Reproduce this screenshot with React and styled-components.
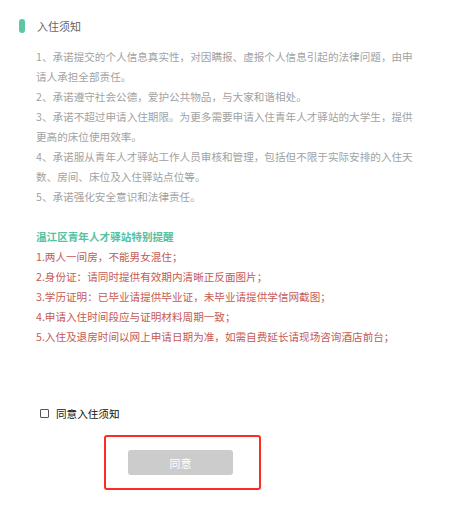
import styled, { createGlobalStyle } from "styled-components";

const GlobalStyle = createGlobalStyle`
  html, body {
    margin: 0;
    padding: 0;
    background: #fff;
  }
  body {
    font-family: "Microsoft YaHei", "Noto Sans CJK SC", "Noto Sans", sans-serif;
  }
`;

const notices = [
  "1、承诺提交的个人信息真实性，对因瞒报、虚报个人信息引起的法律问题，由申请人承担全部责任。",
  "2、承诺遵守社会公德，爱护公共物品，与大家和谐相处。",
  "3、承诺不超过申请入住期限。为更多需要申请入住青年人才驿站的大学生，提供更高的床位使用效率。",
  "4、承诺服从青年人才驿站工作人员审核和管理，包括但不限于实际安排的入住天数、房间、床位及入住驿站点位等。",
  "5、承诺强化安全意识和法律责任。",
];

const reminders = [
  "1.两人一间房，不能男女混住；",
  "2.身份证：请同时提供有效期内清晰正反面图片；",
  "3.学历证明：已毕业请提供毕业证，未毕业请提供学信网截图；",
  "4.申请入住时间段应与证明材料周期一致；",
  "5.入住及退房时间以网上申请日期为准，如需自费延长请现场咨询酒店前台；",
];

export default function App() {
  return (
    <>
      <GlobalStyle />
      <Page>
        <Header>
          <Marker />
          <Title>入住须知</Title>
        </Header>
        <Body>
          <NoticeList>
            {notices.map((t) => (
              <Line key={t}>{t}</Line>
            ))}
          </NoticeList>
          <RemindTitle>温江区青年人才驿站特别提醒</RemindTitle>
          <RemindList>
            {reminders.map((t) => (
              <Line key={t}>{t}</Line>
            ))}
          </RemindList>
        </Body>
        <AgreeRow>
          <Box />
          <AgreeLabel>同意入住须知</AgreeLabel>
        </AgreeRow>
        <Highlight>
          <AgreeButton disabled>同意</AgreeButton>
        </Highlight>
      </Page>
    </>
  );
}

const Page = styled.div`
  width: 449px;
  height: 506px;
  box-sizing: border-box;
  padding-top: 16px;
  background: #fff;
`;

const Header = styled.div`
  display: flex;
  align-items: center;
  height: 20px;
  padding-left: 19px;
`;

const Marker = styled.span`
  width: 6px;
  height: 14px;
  border-radius: 3px;
  background: #5cc7a2;
`;

const Title = styled.span`
  margin-left: 12px;
  font-size: 11px;
  color: #666;
`;

const Body = styled.div`
  margin-top: 11px;
  padding-left: 36px;
  width: 382px;
  font-size: 10.6px;
  line-height: 20px;
`;

const NoticeList = styled.div`
  color: #a2a2a2;
`;

const Line = styled.div``;

const RemindTitle = styled.div`
  margin-top: 20px;
  color: #55c2a2;
  font-weight: 600;
`;

const RemindList = styled.div`
  color: #c45a54;
`;

const AgreeRow = styled.div`
  display: flex;
  align-items: center;
  height: 20px;
  margin-top: 56px;
  padding-left: 40px;
`;

const Box = styled.span`
  width: 7px;
  height: 7px;
  border: 1px solid #555;
  border-radius: 1px;
`;

const AgreeLabel = styled.span`
  margin-left: 7px;
  font-size: 10.6px;
  color: #111;
`;

const Highlight = styled.div`
  margin: 12px 0 0 104px;
  width: 157px;
  height: 55px;
  box-sizing: border-box;
  border: 2.5px solid #ff2a22;
  border-radius: 3px;
  padding: 13px 0 0 22px;
`;

const AgreeButton = styled.button`
  display: flex;
  align-items: center;
  justify-content: center;
  width: 105px;
  height: 25px;
  border: 0;
  border-radius: 3px;
  background: #cccccc;
  color: #fff;
  font-family: inherit;
  font-size: 11px;
  padding: 0;
`;
